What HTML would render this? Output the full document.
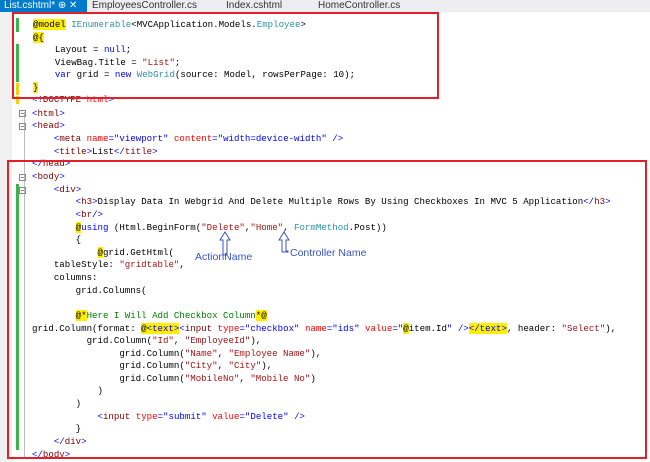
<!DOCTYPE html>
<html><head><style>
body{margin:0;width:650px;height:462px;overflow:hidden;background:#fff;position:relative;font-family:"Liberation Mono",monospace;}
.tabs{position:absolute;left:0;top:0;width:650px;height:12px;background:#eeeef2;overflow:hidden;font-family:"Liberation Sans",sans-serif;font-size:10px;line-height:12px;color:#333}
.tab{position:absolute;top:0}
.gut{position:absolute;left:0;top:12px;width:12px;height:450px;background:#f0f0f0}
.l{position:absolute;left:32px;font-size:9.1px;line-height:12px;white-space:pre;color:#000}
.k{color:#0000ff}.s{color:#a31515}.t{color:#2b91af}.c{color:#008000}.e{color:#800000}.a{color:#ff0000}.y{background:#ffee00}
.box{position:absolute;border:2px solid #e0202a;box-sizing:border-box}
.g{position:absolute;left:16px;width:3px;background:#3cb44b}
.ann{position:absolute;font-family:"Liberation Sans",sans-serif;font-size:10.5px;color:#3a55c0}
</style></head><body>
<div class="tabs">
<div class="tab" style="left:0;width:87px;height:12px;background:#007acc;color:#fff;padding-left:4px;box-sizing:border-box">List.cshtml* ⊕ ✕</div>
<div class="tab" style="left:92px">EmployeesController.cs</div>
<div class="tab" style="left:226px">Index.cshtml</div>
<div class="tab" style="left:318px">HomeController.cs</div>
</div>
<div class="gut"></div>
<div class="g" style="top:18px;height:14px"></div>
<div class="g" style="top:44px;height:38px"></div>
<div class="g" style="top:83px;height:12px;background:#f2d200"></div>
<div class="g" style="top:96px;height:8px;background:#f2d200"></div>
<div class="g" style="top:184px;height:266px"></div>
<div style="position:absolute;left:24px;top:112px;width:1px;height:345px;background:#bbb"></div>

<div class="l" style="top:19px;left:33px"><span class="y">@model</span> <span class="t">IEnumerable</span>&lt;MVCApplication.Models.<span class="t">Employee</span>&gt;</div>
<div class="l" style="top:32px;left:33px"><span class="y">@{</span></div>
<div class="l" style="top:44px;left:33px">    Layout = <span class="k">null</span>;</div>
<div class="l" style="top:57px;left:33px">    ViewBag.Title = <span class="s">"List"</span>;</div>
<div class="l" style="top:69px;left:33px">    <span class="k">var</span> grid = <span class="k">new</span> <span class="t">WebGrid</span>(source: Model, rowsPerPage: 10);</div>
<div class="l" style="top:82px;left:33px"><span class="y">}</span></div>
<div class="l" style="top:94px"><span class="k">&lt;!</span><span class="e">DOCTYPE</span> <span class="a">html</span><span class="k">&gt;</span></div>
<div class="l" style="top:108px"><span class="k">&lt;</span><span class="e">html</span><span class="k">&gt;</span></div>
<div class="l" style="top:120px"><span class="k">&lt;</span><span class="e">head</span><span class="k">&gt;</span></div>
<div class="l" style="top:133px">    <span class="k">&lt;</span><span class="e">meta</span> <span class="a">name</span><span class="k">="viewport"</span> <span class="a">content</span><span class="k">="width=device-width"</span> <span class="k">/&gt;</span></div>
<div class="l" style="top:146px">    <span class="k">&lt;</span><span class="e">title</span><span class="k">&gt;</span>List<span class="k">&lt;/</span><span class="e">title</span><span class="k">&gt;</span></div>
<div class="l" style="top:158px"><span class="k">&lt;/</span><span class="e">head</span><span class="k">&gt;</span></div>
<div class="l" style="top:171px"><span class="k">&lt;</span><span class="e">body</span><span class="k">&gt;</span></div>
<div class="l" style="top:184px">    <span class="k">&lt;</span><span class="e">div</span><span class="k">&gt;</span></div>
<div class="l" style="top:196px">        <span class="k">&lt;</span><span class="e">h3</span><span class="k">&gt;</span>Display Data In Webgrid And Delete Multiple Rows By Using Checkboxes In MVC 5 Application<span class="k">&lt;/</span><span class="e">h3</span><span class="k">&gt;</span></div>
<div class="l" style="top:209px">        <span class="k">&lt;</span><span class="e">br</span><span class="k">/&gt;</span></div>
<div class="l" style="top:222px">        <span class="y">@</span><span class="k">using</span> (Html.BeginForm(<span class="s">"Delete"</span>,<span class="s">"Home"</span>, <span class="t">FormMethod</span>.Post))</div>
<div class="l" style="top:234px">        {</div>
<div class="l" style="top:247px">            <span class="y">@</span>grid.GetHtml(</div>
<div class="l" style="top:259px">    tableStyle: <span class="s">"gridtable"</span>,</div>
<div class="l" style="top:272px">    columns:</div>
<div class="l" style="top:285px">        grid.Columns(</div>
<div class="l" style="top:310px">        <span class="y">@*</span><span class="c">Here I Will Add Checkbox Column</span><span class="y">*@</span></div>
<div class="l" style="top:323px">grid.Column(format: <span class="y">@</span><span class="y k">&lt;text&gt;</span><span class="k">&lt;</span><span class="e">input</span> <span class="a">type</span><span class="k">="checkbox"</span> <span class="a">name</span><span class="k">="ids"</span> <span class="a">value</span><span class="k">="</span><span class="y">@</span>item.Id<span class="k">"</span> <span class="k">/&gt;</span><span class="y k">&lt;/text&gt;</span>, header: <span class="s">"Select"</span>),</div>
<div class="l" style="top:335px">          grid.Column(<span class="s">"Id"</span>, <span class="s">"EmployeeId"</span>),</div>
<div class="l" style="top:348px">                grid.Column(<span class="s">"Name"</span>, <span class="s">"Employee Name"</span>),</div>
<div class="l" style="top:360px">                grid.Column(<span class="s">"City"</span>, <span class="s">"City"</span>),</div>
<div class="l" style="top:373px">                grid.Column(<span class="s">"MobileNo"</span>, <span class="s">"Mobile No"</span>)</div>
<div class="l" style="top:385px">            )</div>
<div class="l" style="top:398px">        )</div>
<div class="l" style="top:411px">            <span class="k">&lt;</span><span class="e">input</span> <span class="a">type</span><span class="k">="submit"</span> <span class="a">value</span><span class="k">="Delete"</span> <span class="k">/&gt;</span></div>
<div class="l" style="top:423px">        }</div>
<div class="l" style="top:436px">    <span class="k">&lt;/</span><span class="e">div</span><span class="k">&gt;</span></div>
<div class="l" style="top:449px"><span class="k">&lt;/</span><span class="e">body</span><span class="k">&gt;</span></div>

<svg style="position:absolute;left:0;top:0" width="650" height="462">
<g fill="none" stroke="#3a55c0" stroke-width="1">
<path d="M225 232 L220 240 L223 240 L223 255 L227 255 L227 240 L230 240 Z"/>
<path d="M284 232 L279 240 L282 240 L282 252 L288 252 L288 251 L286 251 L286 240 L289 240 Z"/>
</g>
<g fill="none" stroke="#888" stroke-width="1">
<rect x="19.5" y="110.5" width="6" height="6"/><rect x="19.5" y="123.5" width="6" height="6"/><rect x="19.5" y="174.5" width="6" height="6"/><rect x="19.5" y="187.5" width="6" height="6"/>
<path d="M21 113.5h3M21 126.5h3M21 177.5h3M21 190.5h3"/>
</g>
</svg>
<div class="ann" style="left:195px;top:251px">ActionName</div>
<div class="ann" style="left:290px;top:247px">Controller Name</div>

<div class="box" style="left:12px;top:12px;width:427px;height:87px"></div>
<div class="box" style="left:7px;top:160px;width:640px;height:299px"></div>
</body></html>
